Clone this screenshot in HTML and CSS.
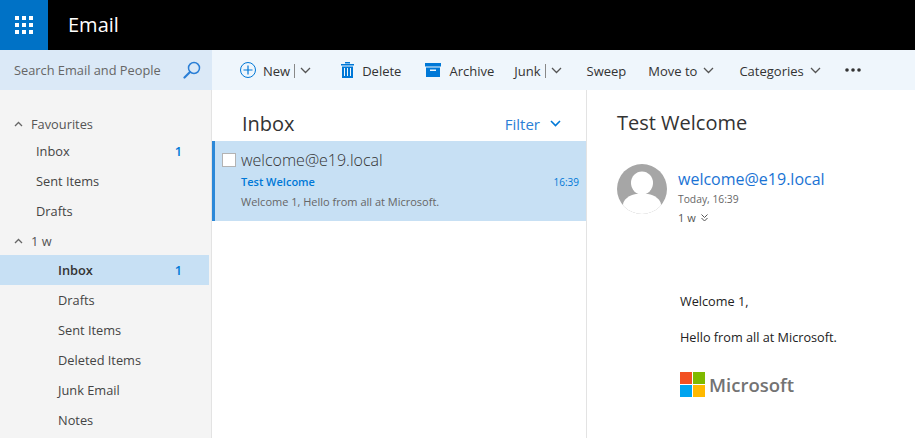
FILE: index.html
```html
<!DOCTYPE html>
<html lang="en">
<head>
    <meta charset="UTF-8">
    <title>Email</title>
    <link rel="stylesheet" href="styles.css">
</head>
<body>
    <header class="topbar">
        <div class="launcher">
            <svg width="18" height="18" viewBox="0 0 18 18" fill="#fff">
                <rect x="0" y="0" width="4" height="4"/><rect x="7" y="0" width="4" height="4"/><rect x="14" y="0" width="4" height="4"/>
                <rect x="0" y="7" width="4" height="4"/><rect x="7" y="7" width="4" height="4"/><rect x="14" y="7" width="4" height="4"/>
                <rect x="0" y="14" width="4" height="4"/><rect x="7" y="14" width="4" height="4"/><rect x="14" y="14" width="4" height="4"/>
            </svg>
        </div>
        <div class="app-name">Email</div>
    </header>

    <div class="toolrow">
        <div class="search">
            <span class="search-text">Search Email and People</span>
            <svg class="search-icon" width="18" height="18" viewBox="0 0 18 18" fill="none" stroke="#2b7fd6">
                <circle cx="11" cy="7" r="5.500" stroke-width="1.500"/>
                <path d="M7 11 L1.500 16.500" stroke-width="2.200" stroke-linecap="round"/>
            </svg>
        </div>
        <nav class="commands">
            <div class="cmd cmd-new">
                <svg width="16" height="16" viewBox="0 0 16 16" fill="none" stroke="#0078d7">
                    <circle cx="8" cy="8" r="7.500"/>
                    <path d="M8 3.500V12.500M3.500 8H12.500" stroke-width="1.200"/>
                </svg>
                <span>New</span><i class="pipe"></i>
                <svg class="chev" width="11" height="7" viewBox="0 0 11 7"><path d="M1 1l4.500 4.500L10 1"/></svg>
            </div>
            <div class="cmd cmd-delete">
                <svg width="13" height="16" viewBox="0 0 13 16" fill="#0078d7">
                    <path d="M0 2h13v1.500H0zM4 0h5v1.500H4z"/>
                    <path d="M1 4.500h11V16H1zM3 6v8h1V6zM6 6v8h1V6zM9 6v8h1V6z" fill-rule="evenodd"/>
                </svg>
                <span>Delete</span>
            </div>
            <div class="cmd cmd-archive">
                <svg width="16" height="14" viewBox="0 0 16 14" fill="#0078d7">
                    <path d="M0 0h16v3.500H0z"/>
                    <path d="M1 4.500h14V14H1zM5 6.500v1.500h6V6.500z" fill-rule="evenodd"/>
                </svg>
                <span>Archive</span>
            </div>
            <div class="cmd cmd-junk">
                <span>Junk</span><i class="pipe"></i>
                <svg class="chev" width="11" height="7" viewBox="0 0 11 7"><path d="M1 1l4.500 4.500L10 1"/></svg>
            </div>
            <div class="cmd cmd-sweep"><span>Sweep</span></div>
            <div class="cmd cmd-move">
                <span>Move to</span>
                <svg class="chev" width="11" height="7" viewBox="0 0 11 7"><path d="M1 1l4.500 4.500L10 1"/></svg>
            </div>
            <div class="cmd cmd-cat">
                <span>Categories</span>
                <svg class="chev" width="11" height="7" viewBox="0 0 11 7"><path d="M1 1l4.500 4.500L10 1"/></svg>
            </div>
            <div class="cmd cmd-more">
                <svg width="16" height="4" viewBox="0 0 16 4" fill="#333">
                    <circle cx="2" cy="2" r="1.800"/><circle cx="8" cy="2" r="1.800"/><circle cx="14" cy="2" r="1.800"/>
                </svg>
            </div>
        </nav>
    </div>

    <main class="panes">
        <aside class="folders">
            <div class="group group-first">
                <svg class="caret" width="9" height="6" viewBox="0 0 9 6"><path d="M1 5l3.500-3.500L8 5"/></svg>
                <span>Favourites</span>
            </div>
            <div class="folder"><span>Inbox</span><b class="count">1</b></div>
            <div class="folder"><span>Sent Items</span></div>
            <div class="folder"><span>Drafts</span></div>
            <div class="group">
                <svg class="caret" width="9" height="6" viewBox="0 0 9 6"><path d="M1 5l3.500-3.500L8 5"/></svg>
                <span>1 w</span>
            </div>
            <div class="folder sub selected"><span>Inbox</span><b class="count">1</b></div>
            <div class="folder sub"><span>Drafts</span></div>
            <div class="folder sub"><span>Sent Items</span></div>
            <div class="folder sub"><span>Deleted Items</span></div>
            <div class="folder sub"><span>Junk Email</span></div>
            <div class="folder sub"><span>Notes</span></div>
        </aside>

        <section class="list">
            <div class="list-head">
                <h2>Inbox</h2>
                <div class="filter">
                    <span>Filter</span>
                    <svg class="chev-blue" width="11" height="7" viewBox="0 0 11 7"><path d="M1 1l4.500 4.500L10 1"/></svg>
                </div>
            </div>
            <div class="message">
                <div class="msg-from"><i class="checkbox"></i><span>welcome@e19.local</span></div>
                <div class="msg-subject"><span>Test Welcome</span><span class="msg-time">16:39</span></div>
                <div class="msg-preview">Welcome 1, Hello from all at Microsoft.</div>
            </div>
        </section>

        <section class="reading">
            <h2 class="subject">Test Welcome</h2>
            <div class="sender">
                <svg class="avatar" width="50" height="50" viewBox="0 0 50 50">
                    <defs><clipPath id="round"><circle cx="25" cy="25" r="25"/></clipPath></defs>
                    <g clip-path="url(#round)">
                        <rect width="50" height="50" fill="#a6a6a6"/>
                        <ellipse cx="25" cy="19" rx="11" ry="11.500" fill="#fff"/>
                        <path d="M6 50V41c0-6 7-10 13-11h12c6 1 13 5 13 11v9z" fill="#fff"/>
                    </g>
                </svg>
                <div class="sender-info">
                    <div class="sender-name">welcome@e19.local</div>
                    <div class="sender-date">Today, 16:39</div>
                    <div class="sender-to">
                        <span>1 w</span>
                        <svg width="7" height="8" viewBox="0 0 7 8" fill="none" stroke="#555"><path d="M.5 .5L3.500 3.500 6.500 .5M.5 4L3.500 7 6.500 4"/></svg>
                    </div>
                </div>
            </div>
            <div class="body-text">
                <p>Welcome 1,</p>
                <p>Hello from all at Microsoft.</p>
                <div class="ms-logo">
                    <svg width="25" height="25" viewBox="0 0 25 25">
                        <rect width="12" height="12" fill="#f25022"/>
                        <rect x="13" width="12" height="12" fill="#7fba00"/>
                        <rect y="13" width="12" height="12" fill="#00a4ef"/>
                        <rect x="13" y="13" width="12" height="12" fill="#ffb900"/>
                    </svg>
                    <span>Microsoft</span>
                </div>
            </div>
        </section>
    </main>
</body>
</html>
```

FILE: styles.css
```css
html, body {
    margin: 0;
    padding: 0;
    height: 100%;
    overflow: hidden;
}

body {
    font-family: "Open Sans", "Noto Sans", sans-serif;
    font-size: 12.800px;
    color: #333;
    background-color: #fff;
}

.topbar {
    display: flex;
    height: 50px;
    background-color: #000;
    color: #fff;
}

.launcher {
    display: flex;
    align-items: center;
    justify-content: center;
    width: 48px;
    background-color: #0072c6;
}

.app-name {
    margin-left: 20px;
    font-size: 20px;
    line-height: 50px;
}

.toolrow {
    display: flex;
    height: 40px;
}

.search {
    display: flex;
    align-items: center;
    justify-content: space-between;
    box-sizing: border-box;
    width: 212px;
    padding: 0 11px 0 14px;
    background-color: #dbe9f7;
}

.search-text {
    color: #666;
}

.commands {
    display: flex;
    flex: 1;
    align-items: center;
    background-color: #eff6fc;
}

.cmd {
    display: flex;
    align-items: center;
    gap: 8px;
    color: #333;
    font-size: 13px;
}

.cmd span { margin-top: 2px; }

.cmd-new { margin-left: 28px; }
.cmd-delete { margin-left: 30px; }
.cmd-archive { margin-left: 24px; }
.cmd-junk { margin-left: 20px; }
.cmd-sweep { margin-left: 25px; }
.cmd-move { margin-left: 22px; }
.cmd-cat { margin-left: 25px; }
.cmd-more { margin-left: 24px; }

.cmd-new, .cmd-junk { gap: 0; }
.cmd-new span { margin: 2px 4px 0 7px; }
.cmd-junk span { margin-right: 4px; }
.cmd-move, .cmd-cat { gap: 6px; }

.pipe {
    width: 1px;
    height: 14px;
    margin: 2px 5px 0 0;
    background-color: #888;
}

.chev path, .caret path, .chev-blue path {
    fill: none;
    stroke-width: 1.300;
}

.chev path { stroke: #555; }
.caret path { stroke: #666; }
.chev-blue path { stroke: #0078d7; stroke-width: 1.600; }

.panes {
    display: flex;
    height: 348px;
}

.folders {
    box-sizing: border-box;
    width: 212px;
    padding-right: 2px;
    border-right: 1px solid #e3e3e3;
    background-color: #f4f4f4;
}

.group {
    display: flex;
    align-items: center;
    height: 29px;
    padding-left: 14px;
    gap: 8px;
    color: #555;
}

.group-first {
    height: 24px;
    margin-top: 22px;
}

.folder {
    display: flex;
    align-items: center;
    justify-content: space-between;
    height: 30px;
    padding: 0 27px 0 36px;
    color: #444;
}

.folder.sub { padding-left: 58px; }

.folder.selected {
    background-color: #c7e0f4;
    font-weight: 600;
    color: #333;
}

.count {
    color: #0078d7;
    font-weight: 600;
}

.list {
    box-sizing: border-box;
    width: 375px;
    border-right: 1px solid #e3e3e3;
}

.list-head {
    display: flex;
    align-items: center;
    justify-content: space-between;
    box-sizing: border-box;
    height: 51px;
    padding: 16px 25px 0 30px;
}

.list-head h2 {
    margin: 0;
    font-size: 20px;
    font-weight: 400;
}

.filter {
    display: flex;
    align-items: center;
    gap: 10px;
    color: #2b7fd6;
    font-size: 15px;
}

.message {
    box-sizing: border-box;
    height: 80px;
    padding: 8px 7px 0 7px;
    border-left: 3px solid #2b88d8;
    background-color: #c7e0f4;
}

.msg-from {
    display: flex;
    align-items: center;
    gap: 5px;
    font-size: 16px;
    font-weight: 300;
    line-height: 22px;
}

.checkbox {
    box-sizing: border-box;
    width: 14px;
    height: 14px;
    border: 1px solid #b3b3b3;
    background-color: #fff;
}

.msg-subject {
    display: flex;
    justify-content: space-between;
    margin: 1px 0 0 19px;
    color: #0078d7;
    font-size: 11px;
    font-weight: 600;
    line-height: 20px;
}

.msg-time {
    font-size: 10px;
    font-weight: 400;
}

.msg-preview {
    margin: 0 0 0 19px;
    color: #666;
    font-size: 11px;
    line-height: 20px;
}

.reading {
    flex: 1;
    padding-left: 30px;
}

.subject {
    margin: 19px 0 0;
    font-size: 20px;
    font-weight: 400;
    line-height: 28px;
}

.sender {
    display: flex;
    gap: 11px;
    margin-top: 27px;
}

.sender-info { padding-top: 4px; }

.sender-name {
    color: #1a73d4;
    font-size: 16px;
    line-height: 22px;
}

.sender-date {
    margin-top: 2px;
    color: #666;
    font-size: 10.300px;
    line-height: 14px;
}

.sender-to {
    display: flex;
    align-items: center;
    gap: 5px;
    margin-top: 4px;
    color: #555;
    font-size: 11px;
    line-height: 16px;
}

.body-text {
    margin: 67px 0 0 63px;
    color: #222;
    font-size: 12.700px;
}

.body-text p {
    margin: 0 0 19px;
    line-height: 17px;
}

.ms-logo {
    display: flex;
    align-items: center;
    gap: 4px;
    margin-top: 26px;
    color: #737373;
    font-size: 18.500px;
    font-weight: 600;
}
```
